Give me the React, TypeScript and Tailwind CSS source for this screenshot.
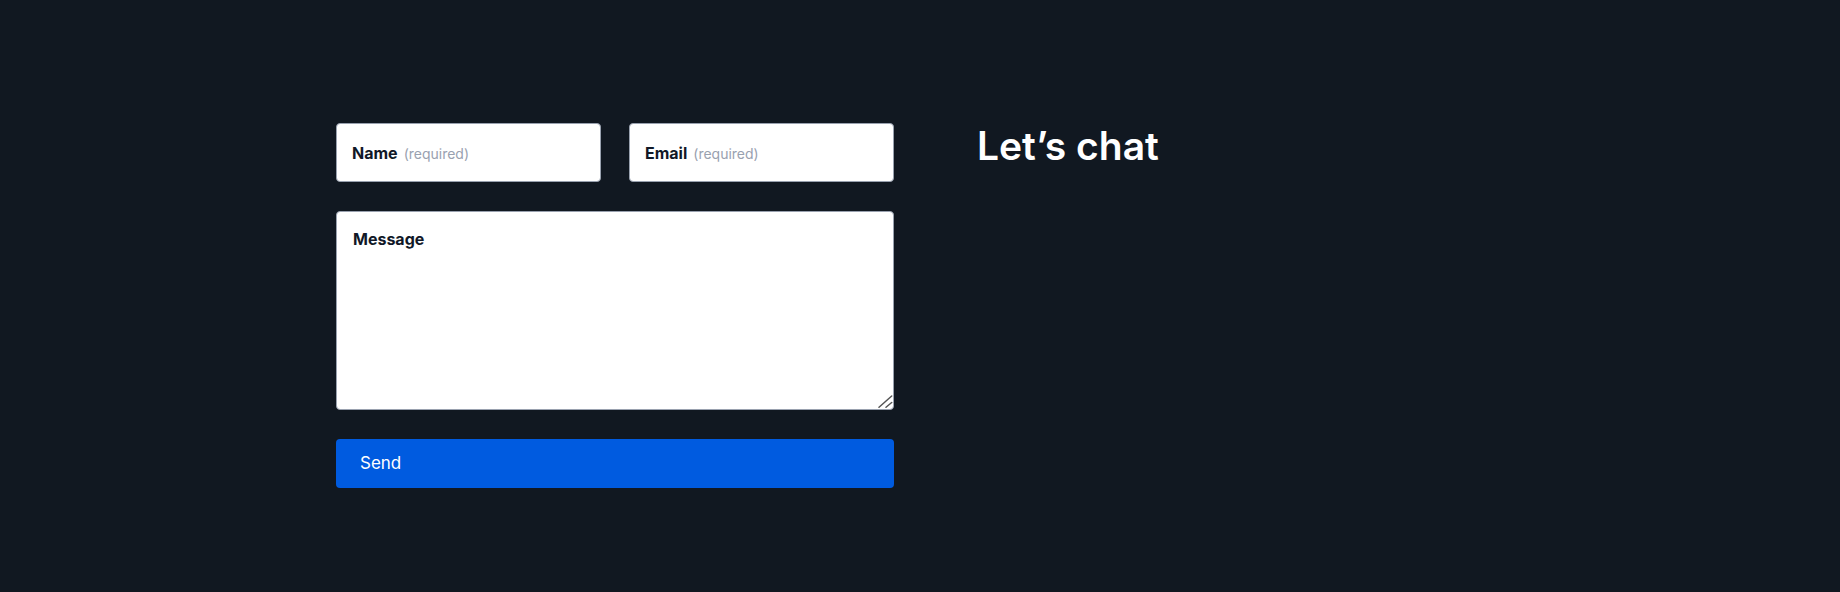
import { useState } from "react";

function Field({ label, hint, type = "text" }: { label: string; hint?: string; type?: string }) {
  const [value, setValue] = useState("");
  return (
    <div className="relative flex-1">
      <input
        type={type}
        value={value}
        onChange={(e) => setValue(e.target.value)}
        className="block w-full h-[59px] px-4 bg-white border border-gray-400 rounded-[4px] text-base text-gray-900 outline-none"
      />
      {!value && (
        <label className="absolute left-4 top-[18px] flex items-baseline gap-[6px] pointer-events-none leading-6">
          <span className="text-base font-bold text-[#111827]">{label}</span>
          {hint && <span className="text-sm text-gray-400">{hint}</span>}
        </label>
      )}
    </div>
  );
}

export default function App() {
  const [message, setMessage] = useState("");

  return (
    <div className="h-screen overflow-hidden bg-[#111821] font-['Inter',sans-serif]">
      <div className="w-[1168px] mx-auto pt-[123px] flex gap-[83px]">
        {/* Formulario */}
        <form className="w-[558px] flex flex-col" onSubmit={(e) => e.preventDefault()}>
          <div className="flex gap-[28px]">
            <Field label="Name" hint="(required)" />
            <Field label="Email" hint="(required)" type="email" />
          </div>

          <div className="relative mt-[29px]">
            <textarea
              value={message}
              onChange={(e) => setMessage(e.target.value)}
              placeholder="Message"
              className="block w-full h-[199px] px-4 pt-[15px] resize-none bg-white border border-gray-400 rounded-[4px] text-base text-gray-900 outline-none placeholder:font-bold placeholder:text-[#111827]"
            />
            <svg className="absolute right-0 bottom-0 w-4 h-4 pointer-events-none" viewBox="0 0 16 16" fill="none">
              <path d="M1 13.3L13.7 2M8 13.3L13.7 8.5" stroke="#555" strokeWidth="1.5" strokeLinecap="round" />
            </svg>
          </div>

          <button
            type="submit"
            className="mt-[29px] h-[49px] w-full text-left px-6 bg-[#005be0] rounded-[4px] text-white text-[17px]"
          >
            Send
          </button>
        </form>

        {/* Titulo */}
        <h2 className="text-[39px] leading-[46px] font-semibold text-white">Let’s chat</h2>
      </div>
    </div>
  );
}
